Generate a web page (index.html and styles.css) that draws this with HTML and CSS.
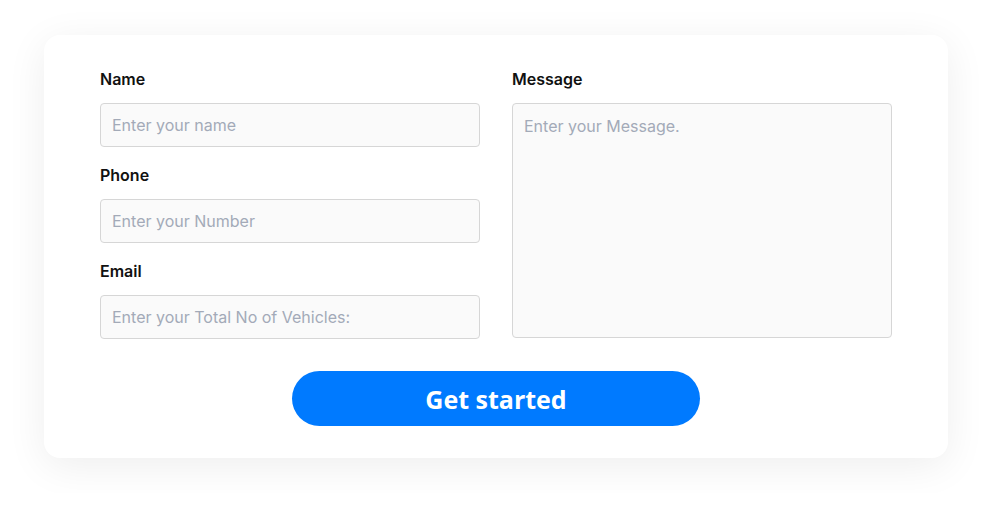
FILE: index.html
```html
<!DOCTYPE html>
<html>
<head>
<meta charset="utf-8">
<link rel="stylesheet" href="styles.css">
</head>
<body>
<form class="card">
  <div class="cols">
    <div class="col">
      <label class="field">
        <span class="label">Name</span>
        <input class="input" type="text" placeholder="Enter your name">
      </label>
      <label class="field">
        <span class="label">Phone</span>
        <input class="input" type="text" placeholder="Enter your Number">
      </label>
      <label class="field">
        <span class="label">Email</span>
        <input class="input" type="text" placeholder="Enter your Total No of Vehicles:">
      </label>
    </div>
    <div class="col">
      <label class="field field-grow">
        <span class="label">Message</span>
        <textarea class="input textarea" placeholder="Enter your Message."></textarea>
      </label>
    </div>
  </div>
  <div class="actions">
    <button type="button" class="btn">Get started</button>
  </div>
</form>
</body>
</html>
```
FILE: styles.css
```css
html, body {
  margin: 0;
  background: #ffffff;
}
body {
  padding: 35px 44px;
  font-family: Inter, "Noto Sans", sans-serif;
}
.card {
  width: 904px;
  box-sizing: border-box;
  background: #fff;
  border-radius: 16px;
  box-shadow: 0 8px 40px rgba(0, 0, 0, 0.07);
  padding: 34px 56px 32px;
}
.cols {
  display: grid;
  grid-template-columns: 380px 380px;
  column-gap: 32px;
}
.col {
  display: flex;
  flex-direction: column;
  gap: 18px;
}
.field {
  display: flex;
  flex-direction: column;
  gap: 14px;
}
.field-grow {
  flex: 1;
}
.label {
  font-size: 16px;
  line-height: 20px;
  font-weight: 600;
  color: #111111;
}
.input {
  box-sizing: border-box;
  height: 44px;
  width: 100%;
  margin: 0;
  border: 1px solid #d6d6d6;
  border-radius: 4px;
  background: #fafafa;
  padding: 0 11px;
  font-family: Inter, "Noto Sans", sans-serif;
  font-size: 16px;
  color: #333;
  outline: none;
}
.input::placeholder {
  color: #a3aab8;
}
.textarea {
  height: 235px;
  resize: none;
  padding: 12px 11px;
  line-height: 20px;
}
.actions {
  display: flex;
  justify-content: center;
  margin-top: 32px;
}
.btn {
  width: 408px;
  height: 55px;
  border: none;
  border-radius: 28px;
  background: #007aff;
  color: #fff;
  font-family: "Open Sans", Inter, sans-serif;
  font-weight: 700;
  font-size: 25px;
  cursor: pointer;
}
```
